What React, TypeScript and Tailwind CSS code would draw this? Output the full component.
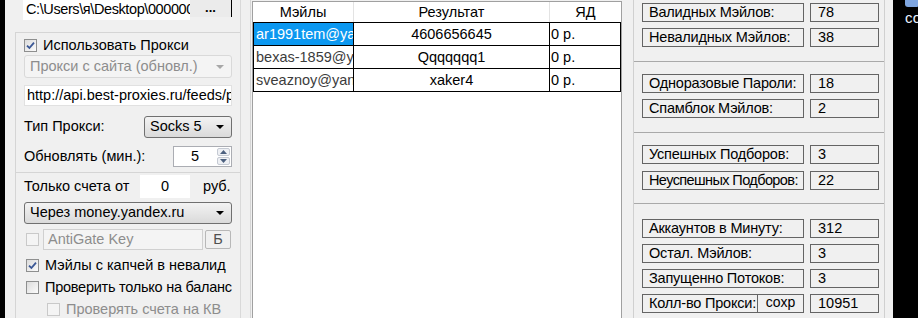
import React from "react";

// small win7-ish controls
const Tick = ({ color = "#3a5795" }: { color?: string }) => (
  <svg width="9" height="9" viewBox="0 0 9 9">
    <path d="M1 4.6 L3.4 7 L8 1.6" stroke={color} strokeWidth="1.8" fill="none" />
  </svg>
);

const CheckBox = ({ checked = false, disabled = false }: { checked?: boolean; disabled?: boolean }) => (
  <div
    className={`flex h-[13px] w-[13px] shrink-0 items-center justify-center border ${
      disabled
        ? "border-[#c9c9c9] bg-[#f4f4f4]"
        : "border-[#8e8f8f] bg-linear-to-br from-[#dcdcdc] to-[#fbfbfb]"
    }`}
  >
    {checked && <Tick />}
  </div>
);

const Arrow = ({ color = "#000" }: { color?: string }) => (
  <svg width="8" height="4" viewBox="0 0 8 4">
    <path d="M0 0h8L4 4z" fill={color} />
  </svg>
);

const Combo = ({ text, className = "", disabled = false }: { text: string; className?: string; disabled?: boolean }) => (
  <div
    className={`flex items-center justify-between rounded-[3px] border pl-[5px] pr-[7px] ${
      disabled
        ? "border-[#d9d9d9] bg-[#f4f4f4] text-[#8d8d8d]"
        : "border-[#707070] bg-linear-to-b from-[#f3f3f3] to-[#dadada]"
    } ${className}`}
  >
    <span className="truncate">{text}</span>
    <Arrow color={disabled ? "#a8a8a8" : "#000"} />
  </div>
);

const Stat = ({ label, value, extra, tight }: { label: string; value: string; extra?: string; tight?: boolean }) => (
  <div className="flex gap-[6px]">
    <div className="flex h-[19px] w-[162px] items-center overflow-hidden border border-[#646464]">
      <span
        className={`whitespace-nowrap pl-[6px] leading-none ${tight ? "tracking-[-0.6px]" : "tracking-[-0.2px]"}`}
      >
        {label}
      </span>
      {extra && (
        <span className="ml-auto flex h-full w-[46px] shrink-0 items-start justify-center border-l border-[#646464] text-[14px] leading-[15px]">
          {extra}
        </span>
      )}
    </div>
    <div className="flex h-[19px] w-[69px] items-center border border-[#646464] pl-[7px] leading-none">{value}</div>
  </div>
);

const rows = [
  { mail: "ar1991tem@yandex.ru", res: "4606656645", yd: "0 р.", sel: true },
  { mail: "bexas-1859@yandex.ru", res: "Qqqqqqq1", yd: "0 р.", sel: false },
  { mail: "sveaznoy@yandex.ru", res: "xaker4", yd: "0 р.", sel: false },
];

export default function App() {
  return (
    <div className="flex h-[318px] w-[918px] overflow-hidden bg-[#f0f0f0] font-['Liberation_Sans',Arial,sans-serif] text-[14.5px] text-black">
      <div className="w-[5px] shrink-0 bg-black" />

      {/* left settings panel */}
      <div className="flex w-[236px] shrink-0 flex-col border-r border-[#d9d9d9]">
        <div className="flex h-[32px] shrink-0 items-start pl-[18px]">
          <div className="flex h-[20px] w-[167px] items-center overflow-hidden bg-white pl-[3px]">
            <span className="whitespace-nowrap tracking-[-0.4px]">C:\Users\я\Desktop\000000</span>
            <span className="h-[16px] w-[1px] shrink-0 bg-black" />
          </div>
          <div className="flex h-[17px] w-[42px] items-end justify-center border-r border-black bg-[#ebebeb] pb-[3px] text-[13px] font-bold leading-none">
            ...
          </div>
        </div>

        <div className="ml-[10px] flex flex-1 flex-col border-l border-t border-[#d5d5d5]">
          <div className="flex h-[139px] shrink-0 flex-col px-[8px]">
            <div className="mt-[4px] flex h-[17px] items-center gap-[6px]">
              <CheckBox checked />
              <span>Использовать Прокси</span>
            </div>
            <Combo disabled text="Прокси с сайта (обновл.)" className="mt-[1px] h-[23px]" />
            <div className="mt-[7px] flex h-[21px] items-center overflow-hidden border border-[#e1e1e1] bg-white pl-[2px]">
              <span className="whitespace-nowrap">http://api.best-proxies.ru/feeds/proxylist</span>
            </div>
            <div className="mt-[10px] flex h-[22px] items-center justify-between">
              <span>Тип Прокси:</span>
              <Combo text="Socks 5" className="h-[22px] w-[88px]" />
            </div>
            <div className="mt-[8px] flex h-[21px] items-center justify-between">
              <span>Обновлять (мин.):</span>
              <div className="flex h-[21px] w-[59px] border border-[#abadb3] bg-white">
                <span className="flex-1 text-center leading-[19px]">5</span>
                <div className="flex w-[15px] flex-col gap-[1px] p-[1px]">
                  <div className="flex flex-1 items-center justify-center rounded-[2px] border border-[#c5cad3] bg-[#eef0f4]">
                    <svg width="7" height="4" viewBox="0 0 7 4"><path d="M0 4h7L3.5 0z" fill="#4c607f" /></svg>
                  </div>
                  <div className="flex flex-1 items-center justify-center rounded-[2px] border border-[#c5cad3] bg-[#eef0f4]">
                    <svg width="7" height="4" viewBox="0 0 7 4"><path d="M0 0h7L3.5 4z" fill="#4c607f" /></svg>
                  </div>
                </div>
              </div>
            </div>
          </div>

          <div className="flex flex-1 flex-col border-t border-[#d5d5d5] px-[8px]">
            <div className="mt-[2px] flex h-[23px] items-center">
              <span className="w-[116px]">Только счета от</span>
              <div className="flex h-[23px] w-[50px] items-center justify-center bg-white">0</div>
              <span className="ml-[13px]">руб.</span>
            </div>
            <Combo text="Через money.yandex.ru" className="mt-[4px] h-[22px]" />
            <div className="mt-[5px] flex h-[21px] items-center">
              <div className="ml-[2px]">
                <CheckBox disabled />
              </div>
              <div className="ml-[4px] flex h-[21px] w-[160px] items-center border border-[#d0d0d0] bg-[#f4f4f4] pl-[4px] text-[#8d8d8d]">
                AntiGate Key
              </div>
              <div className="ml-[2px] flex h-[19px] w-[26px] items-center justify-center rounded-[2px] border border-[#b8b8b8] bg-[#f0f0f0] text-[#505050]">
                Б
              </div>
            </div>
            <div className="mt-[7px] flex h-[17px] items-center gap-[6px] pl-[2px]">
              <CheckBox checked />
              <span>Мэйлы с капчей в невалид</span>
            </div>
            <div className="mt-[5px] flex h-[17px] items-center gap-[6px] pl-[2px]">
              <CheckBox />
              <span className="whitespace-nowrap tracking-[-0.25px]">Проверить только на баланс</span>
            </div>
            <div className="mt-[5px] flex h-[17px] items-center gap-[6px] pl-[23px] text-[#8d8d8d]">
              <CheckBox disabled />
              <span className="whitespace-nowrap">Проверять счета на КВ</span>
            </div>
          </div>
        </div>
      </div>

      <div className="w-[10px] shrink-0 border-r border-[#d5d5d5]" />

      {/* results table */}
      <div className="ml-[1px] mt-[1px] flex h-[317px] w-[370px] shrink-0 flex-col border-x border-t border-[#a0a0a0] bg-white">
        <div className="flex h-[20px] shrink-0">
          <div className="w-[101px] border-r border-[#e3e3e3] text-center leading-[20px]">Мэйлы</div>
          <div className="w-[196px] border-r border-[#e3e3e3] text-center leading-[20px]">Результат</div>
          <div className="w-[71px] text-center leading-[20px]">ЯД</div>
        </div>
        <div className="border-x border-t border-black">
          {rows.map((r) => (
            <div key={r.mail} className="flex h-[23px] border-b border-black">
              <div
                className={`w-[100px] overflow-hidden whitespace-nowrap border-r border-black pl-[2px] leading-[22px] ${
                  r.sel ? "bg-[#0c98f0] text-white" : "text-[#3c3c3c]"
                }`}
              >
                {r.mail}
              </div>
              <div className="w-[196px] border-r border-black text-center leading-[22px]">{r.res}</div>
              <div className="w-[70px] pl-[1px] leading-[22px]">{r.yd}</div>
            </div>
          ))}
        </div>
      </div>

      <div className="w-[11px] shrink-0" />

      {/* stats panel */}
      <div className="flex w-[252px] shrink-0 flex-col border-x border-[#d0d0d0]">
        <div className="flex h-[62px] shrink-0 flex-col gap-[6px] border-b border-[#a9a9a9] pl-[8px] pt-[3px]">
          <Stat label="Валидных Мэйлов:" value="78" />
          <Stat label="Невалидных Мэйлов:" value="38" />
        </div>
        <div className="flex h-[71px] shrink-0 flex-col gap-[6px] border-b border-[#a9a9a9] pl-[8px] pt-[12px]">
          <Stat label="Одноразовые Пароли:" value="18" />
          <Stat label="Спамблок Мэйлов:" value="2" />
        </div>
        <div className="flex h-[71px] shrink-0 flex-col gap-[7px] border-b border-[#a9a9a9] pl-[8px] pt-[12px]">
          <Stat label="Успешных Подборов:" value="3" />
          <Stat label="Неуспешных Подборов:" value="22" tight />
        </div>
        <div className="flex flex-1 flex-col gap-[6px] pl-[8px] pt-[15px]">
          <Stat label="Аккаунтов в Минуту:" value="312" />
          <Stat label="Остал. Мэйлов:" value="3" />
          <Stat label="Запущенно Потоков:" value="3" />
          <Stat label="Колл-во Прокси:" value="10951" extra="сохр" />
        </div>
      </div>

      <div className="w-[8px] shrink-0" />

      {/* desktop edge */}
      <div className="flex flex-1 flex-col bg-black pl-[12px]">
        <div className="h-[7px] w-[14px] rounded-b-[3px] bg-[#7fa6e0]" />
        <span className="mt-[5px] text-[15px] leading-[12px] text-[#e8f0ff]">со</span>
      </div>
    </div>
  );
}
